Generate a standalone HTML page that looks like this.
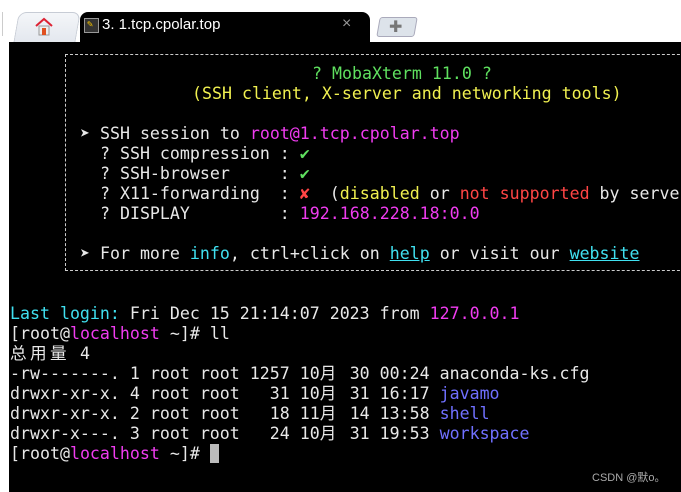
<!DOCTYPE html>
<html><head><meta charset="utf-8"><style>
body{margin:0;width:681px;height:492px;background:#fff;position:relative;overflow:hidden;font-family:"DejaVu Sans Mono","Liberation Mono","Noto Sans CJK SC",monospace}
.term{position:absolute;left:9px;top:42px;width:672px;height:450px;background:#000}
.l{position:absolute;white-space:pre;font-size:16.6px;line-height:20px;color:#e8e8e8}
.box{position:absolute;left:65px;top:54px;width:640px;height:217px;border:1px dashed #ccc;box-sizing:border-box}
.g{color:#5fe05f}.y{color:#f0f050}.m{color:#f03cf0}.c{color:#40e0f0}.r{color:#ff4545}.b{color:#7070ff}
u{text-decoration:underline}
.k{display:inline-block;width:20px}
</style></head><body>
<div style="position:absolute;left:0;top:0;width:681px;height:42px;background:#fff"></div>
<div style="position:absolute;left:2px;top:12px;width:1px;height:24px;background:#ccc"></div>
<div style="position:absolute;left:16px;top:12px;width:60px;height:30px;background:linear-gradient(#f4f6f9,#e3e7ee);border:1px solid #c7ccd5;border-bottom:none;border-radius:8px 8px 0 0;transform:skewX(-10deg)"></div>
<svg style="position:absolute;left:34px;top:17px" width="20" height="19"><path d="M2 9 L10 2 L18 9" fill="none" stroke="#d23" stroke-width="2"/><rect x="5" y="9" width="10" height="9" fill="#eee" stroke="#999"/><rect x="8" y="11" width="4" height="7" fill="#e05020"/></svg>
<div style="position:absolute;left:80px;top:12px;width:290px;height:32px;background:#000;border-radius:8px 8px 0 0"></div>
<div style="position:absolute;left:84px;top:18px;width:13px;height:13px;border:1px solid #999;background:#333"></div>
<div style="position:absolute;left:87px;top:19px;color:#f0c000;font-size:10px">&#9998;</div>
<div style="position:absolute;left:102px;top:16px;color:#fff;font:15px 'Liberation Sans',sans-serif">3. 1.tcp.cpolar.top</div>
<div style="position:absolute;left:342px;top:15px;color:#999;font:16px 'Liberation Sans',sans-serif">×</div>
<div style="position:absolute;left:378px;top:17px;width:36px;height:18px;background:#dde3ea;border:1px solid #aab;border-radius:3px;transform:skewX(-10deg)"></div>
<div style="position:absolute;left:389px;top:17px;color:#777;font:16px 'Liberation Sans',sans-serif">✚</div>
<div class="term"></div>
<div class="box"></div>
<div class="l" style="left:312px;top:64px"><span class="g">? MobaXterm 11.0 ?</span></div>
<div class="l" style="left:192px;top:84px"><span class="y">(SSH client, X-server and networking tools)</span></div>
<div class="l" style="left:80px;top:124px">➤ SSH session to <span class="m">root@1.tcp.cpolar.top</span></div>
<div class="l" style="left:80px;top:144px">  ? SSH compression : <span class="g">✔</span></div>
<div class="l" style="left:80px;top:164px">  ? SSH-browser     : <span class="g">✔</span></div>
<div class="l" style="left:80px;top:184px">  ? X11-forwarding  : <span class="r">✘</span>  (<span class="y">disabled</span> or <span class="r">not supported</span> by server)</div>
<div class="l" style="left:80px;top:204px">  ? DISPLAY         : <span class="m">192.168.228.18:0.0</span></div>
<div class="l" style="left:80px;top:244px">➤ For more <span class="c">info</span>, ctrl+click on <u class="c">help</u> or visit our <u class="c">website</u></div>
<div class="l" style="left:10px;top:304px"><span class="c">Last login:</span> Fri Dec 15 21:14:07 2023 from <span class="m">127.0.0.1</span></div>
<div class="l" style="left:10px;top:324px">[root@<span class="m">localhost</span> ~]# ll</div>
<div class="l" style="left:10px;top:344px"><span class="k">总</span><span class="k">用</span><span class="k">量</span> 4</div>
<div class="l" style="left:10px;top:364px">-rw-------. 1 root root 1257 10<span class="k">月</span> 30 00:24 anaconda-ks.cfg</div>
<div class="l" style="left:10px;top:384px">drwxr-xr-x. 4 root root   31 10<span class="k">月</span> 31 16:17 <span class="b">javamo</span></div>
<div class="l" style="left:10px;top:404px">drwxr-xr-x. 2 root root   18 11<span class="k">月</span> 14 13:58 <span class="b">shell</span></div>
<div class="l" style="left:10px;top:424px">drwxr-x---. 3 root root   24 10<span class="k">月</span> 31 19:53 <span class="b">workspace</span></div>
<div class="l" style="left:10px;top:444px">[root@<span class="m">localhost</span> ~]# </div>
<div style="position:absolute;left:210px;top:444px;width:9px;height:19px;background:#bbb"></div>
<div style="position:absolute;left:592px;top:469px;color:#aaa;font:11px 'Liberation Sans','Noto Sans CJK SC',sans-serif">CSDN @默o。</div>
</body></html>
